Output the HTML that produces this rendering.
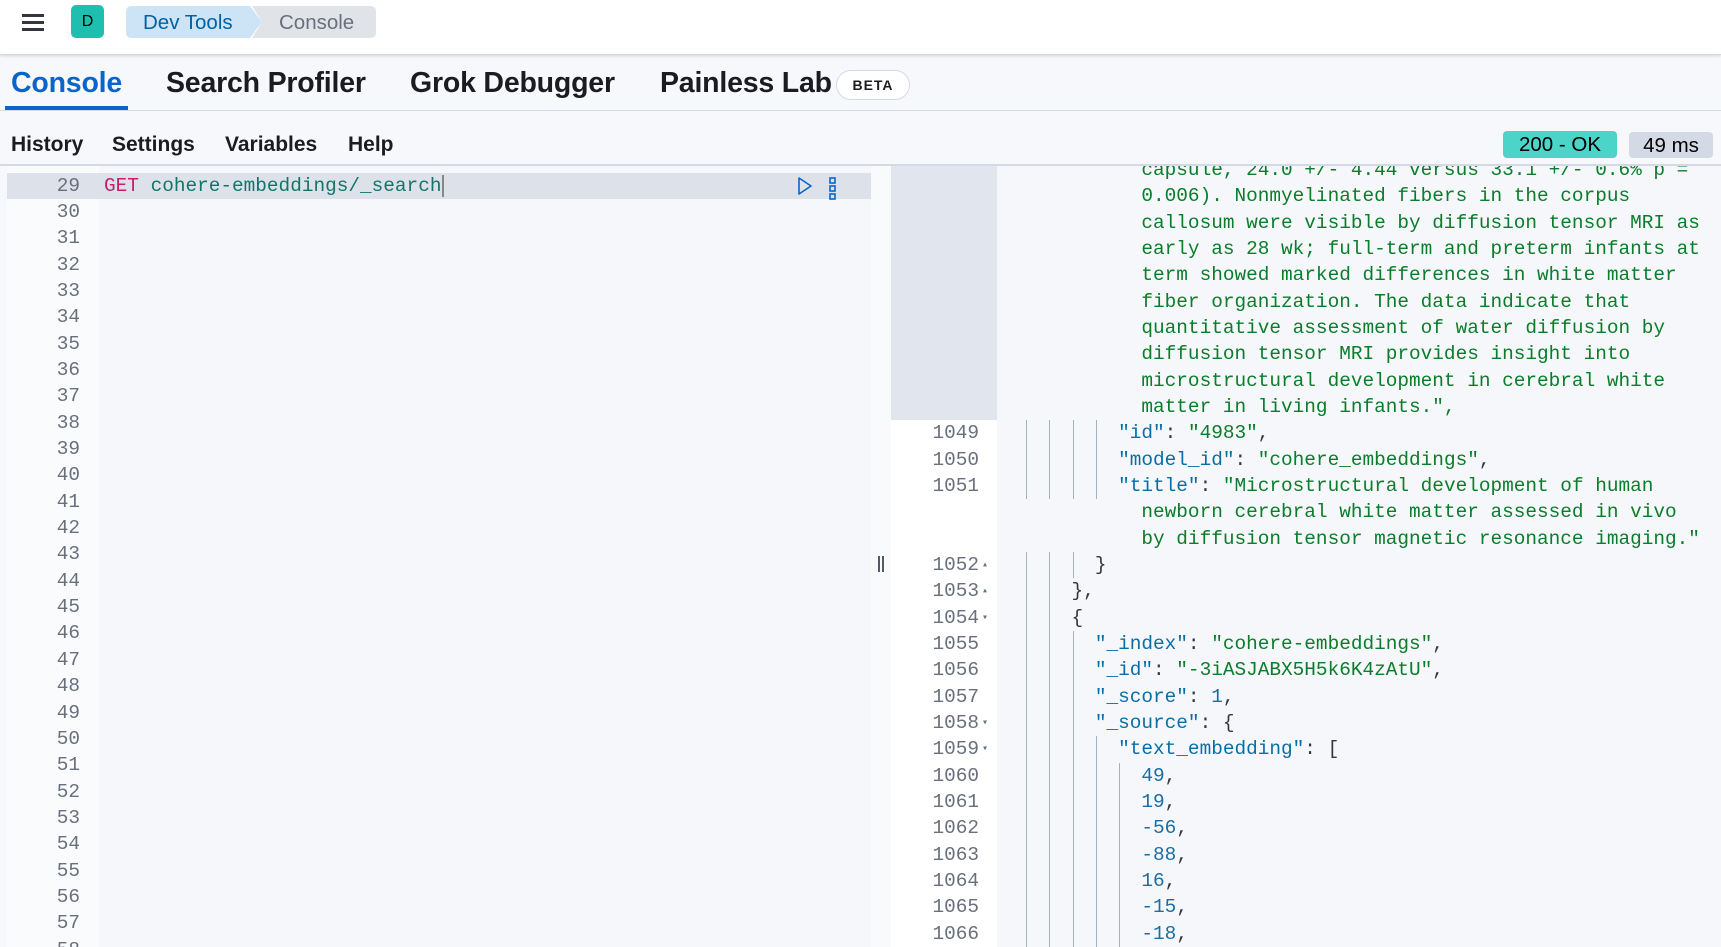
<!DOCTYPE html>
<html><head><meta charset="utf-8"><style>
*{margin:0;padding:0;box-sizing:border-box}
html,body{width:1721px;height:947px;overflow:hidden;background:#f7f8fc;font-family:"Liberation Sans",sans-serif}
.hdr{position:absolute;left:0;top:0;width:1721px;height:55px;background:#fff;box-shadow:0 1px 3px rgba(0,0,0,.15);border-bottom:1px solid #d3dae6}
.abs{position:absolute}
.tab{position:absolute;top:64px;font-size:28.5px;font-weight:bold;color:#1a1c21;line-height:38px;letter-spacing:-0.2px}
.tb{position:absolute;top:131px;font-size:21px;font-weight:bold;color:#1a1c21;line-height:27px}
.mono{font-family:"Liberation Mono",monospace;font-size:19.4px;white-space:pre}
.ln{position:absolute;height:26.34px;line-height:27.5px}
.k{color:#0a6ea6}.s{color:#0b7d2b}.n{color:#1a6ea5}.p{color:#343741}
.g{position:absolute;width:1px;background:#a7b0c0;height:26.34px}
</style></head><body>
<div class="hdr"></div>
<div class="abs" style="left:22px;top:14px;width:22px;height:3px;background:#343741"></div>
<div class="abs" style="left:22px;top:21px;width:22px;height:3px;background:#343741"></div>
<div class="abs" style="left:22px;top:28px;width:22px;height:3px;background:#343741"></div>
<div class="abs" style="left:71px;top:5px;width:33px;height:33px;background:#1fbfaf;border-radius:5px;color:#000;font-size:16px;text-align:center;line-height:33px">D</div>
<div class="abs" style="left:252px;top:6px;width:124px;height:32px;background:#e0e3e8;border-radius:0 5px 5px 0;clip-path:polygon(0 0,100% 0,100% 100%,0 100%,10px 50%)"></div>
<div class="abs" style="left:126px;top:6px;width:136px;height:32px;background:#cce4f5;border-radius:5px 0 0 5px;clip-path:polygon(0 0,124px 0,136px 50%,124px 100%,0 100%)"></div>
<div class="abs" style="left:143px;top:7px;line-height:32px;font-size:20.5px;color:#0061a6">Dev Tools</div>
<div class="abs" style="left:279px;top:7px;line-height:32px;font-size:20.5px;color:#69707d">Console</div>

<div class="tab" style="left:11px;color:#0b64c8">Console</div>
<div class="abs" style="left:5px;top:106px;width:123px;height:4px;background:#0b64c8"></div>
<div class="tab" style="left:166px">Search Profiler</div>
<div class="tab" style="left:410px">Grok Debugger</div>
<div class="tab" style="left:660px">Painless Lab</div>
<div class="abs" style="left:836px;top:70px;width:74px;height:30px;border:1px solid #d3dae6;border-radius:15px;background:#fff;font-size:14px;font-weight:bold;text-align:center;line-height:28px;letter-spacing:1px;color:#1a1c21">BETA</div>
<div class="abs" style="left:0;top:110px;width:1721px;height:1px;background:#d3dae6"></div>

<div class="tb" style="left:11px">History</div>
<div class="tb" style="left:112px">Settings</div>
<div class="tb" style="left:225px">Variables</div>
<div class="tb" style="left:348px">Help</div>
<div class="abs" style="left:1503px;top:131px;width:114px;height:27px;background:#4dd4c8;border-radius:4px;font-size:20.5px;text-align:center;line-height:28px;color:#000">200 - OK</div>
<div class="abs" style="left:1629px;top:132px;width:84px;height:26px;background:#d3dae6;border-radius:4px;font-size:20.5px;text-align:center;line-height:27px;color:#000">49 ms</div>
<div class="abs" style="left:0;top:164px;width:1721px;height:2px;background:#d3dae6"></div>

<!-- left editor -->
<div class="abs" style="left:7px;top:166px;width:92px;height:781px;background:#fafbfd;overflow:hidden"></div>
<div class="abs" style="left:99px;top:166px;width:772px;height:781px;background:#f5f7fa"></div>
<div class="abs" style="left:7px;top:173px;width:864px;height:26px;background:#dde2ea"></div>
<div id="lg" class="abs mono" style="left:7px;top:166px;width:864px;height:781px;overflow:hidden"></div>
<div class="abs mono ln" style="left:104px;top:172.7px"><span style="color:#c61e6d">GET</span> <span style="color:#137569">cohere-embeddings/_search</span></div>
<div class="abs" style="left:442px;top:175px;width:2px;height:22px;background:#888"></div>
<svg class="abs" style="left:796px;top:176px" width="18" height="20" viewBox="0 0 18 20"><path d="M3 2 L15 10 L3 18 Z" fill="none" stroke="#0b64c8" stroke-width="1.6" stroke-linejoin="round"/></svg>
<svg class="abs" style="left:828px;top:177px" width="10" height="24" viewBox="0 0 10 24"><rect x="2" y="1" width="5" height="5" fill="none" stroke="#0b64c8" stroke-width="1.6"/><rect x="2" y="9" width="5" height="5" fill="none" stroke="#0b64c8" stroke-width="1.6"/><rect x="2" y="17" width="5" height="5" fill="none" stroke="#0b64c8" stroke-width="1.6"/></svg>

<!-- resizer -->
<div class="abs" style="left:871px;top:166px;width:20px;height:781px;background:#f9fafc"></div>
<div class="abs" style="left:878px;top:556px;width:2px;height:16px;background:#535966"></div>
<div class="abs" style="left:882px;top:556px;width:2px;height:16px;background:#535966"></div>

<!-- right -->
<div class="abs" style="left:891px;top:166px;width:106px;height:781px;background:#fff"></div>
<div class="abs" style="left:891px;top:166px;width:106px;height:254px;background:#e0e5ee"></div>
<div class="abs" style="left:997px;top:166px;width:724px;height:781px;background:#f5f7fa"></div>
<div id="rg" class="abs mono" style="left:0;top:166px;width:1721px;height:781px;overflow:hidden"></div>

<script>
var lg=document.getElementById('lg'),h='';
for(var n=29;n<=58;n++){var t=172.7+(n-29)*26.34-166;h+='<div class="ln" style="left:0;width:73px;text-align:right;color:#69707d;top:'+t+'px">'+n+'</div>';}
lg.innerHTML=h;
var cw=11.64,base=1026;
var rows=[
[null,0,10,'<span class="s">capsule, 24.0 +/- 4.44 versus 33.1 +/- 0.6% p =</span>'],
[null,0,10,'<span class="s">0.006). Nonmyelinated fibers in the corpus</span>'],
[null,0,10,'<span class="s">callosum were visible by diffusion tensor MRI as</span>'],
[null,0,10,'<span class="s">early as 28 wk; full-term and preterm infants at</span>'],
[null,0,10,'<span class="s">term showed marked differences in white matter</span>'],
[null,0,10,'<span class="s">fiber organization. The data indicate that</span>'],
[null,0,10,'<span class="s">quantitative assessment of water diffusion by</span>'],
[null,0,10,'<span class="s">diffusion tensor MRI provides insight into</span>'],
[null,0,10,'<span class="s">microstructural development in cerebral white</span>'],
[null,0,10,'<span class="s">matter in living infants.",</span>'],
['1049',4,8,'<span class="k">"id"</span><span class="p">: </span><span class="s">"4983"</span><span class="p">,</span>'],
['1050',4,8,'<span class="k">"model_id"</span><span class="p">: </span><span class="s">"cohere_embeddings"</span><span class="p">,</span>'],
['1051',4,8,'<span class="k">"title"</span><span class="p">: </span><span class="s">"Microstructural development of human</span>'],
[null,0,10,'<span class="s">newborn cerebral white matter assessed in vivo</span>'],
[null,0,10,'<span class="s">by diffusion tensor magnetic resonance imaging."</span>'],
['1052▴',3,6,'<span class="p">}</span>'],
['1053▴',2,4,'<span class="p">},</span>'],
['1054▾',2,4,'<span class="p">{</span>'],
['1055',3,6,'<span class="k">"_index"</span><span class="p">: </span><span class="s">"cohere-embeddings"</span><span class="p">,</span>'],
['1056',3,6,'<span class="k">"_id"</span><span class="p">: </span><span class="s">"-3iASJABX5H5k6K4zAtU"</span><span class="p">,</span>'],
['1057',3,6,'<span class="k">"_score"</span><span class="p">: </span><span class="n">1</span><span class="p">,</span>'],
['1058▾',3,6,'<span class="k">"_source"</span><span class="p">: {</span>'],
['1059▾',4,8,'<span class="k">"text_embedding"</span><span class="p">: [</span>'],
['1060',5,10,'<span class="n">49</span><span class="p">,</span>'],
['1061',5,10,'<span class="n">19</span><span class="p">,</span>'],
['1062',5,10,'<span class="n">-56</span><span class="p">,</span>'],
['1063',5,10,'<span class="n">-88</span><span class="p">,</span>'],
['1064',5,10,'<span class="n">16</span><span class="p">,</span>'],
['1065',5,10,'<span class="n">-15</span><span class="p">,</span>'],
['1066',5,10,'<span class="n">-18</span><span class="p">,</span>']
];
h='';
for(var i=0;i<rows.length;i++){
 var r=rows[i],t=420.3+(i-10)*26.34-166;
 if(r[0]){var num=r[0].replace(/[▴▾]/,''),ar=r[0].length>4?r[0].slice(4):'';
  h+='<div class="ln" style="left:891px;width:88px;text-align:right;color:#69707d;top:'+t+'px">'+num+'</div>';
  if(ar)h+='<div class="ln" style="left:982px;font-size:10px;color:#69707d;top:'+t+'px">'+ar+'</div>';}
 for(var g=0;g<r[1];g++)h+='<div class="g" style="left:'+(base+g*23.3)+'px;top:'+t+'px"></div>';
 h+='<div class="ln" style="left:'+(base+r[2]*cw-1)+'px;top:'+t+'px">'+r[3]+'</div>';
}
document.getElementById('rg').innerHTML=h;
</script>
</body></html>
